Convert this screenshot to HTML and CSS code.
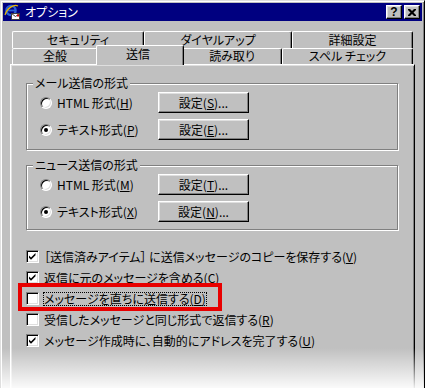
FILE: index.html
```html
<!DOCTYPE html>
<html lang="ja">
<head>
<meta charset="utf-8">
<title>オプション</title>
<link rel="stylesheet" href="styles.css">
</head>
<body>
<div class="window">
  <div class="titlebar">
    <svg class="app-icon" width="16" height="16" viewBox="0 0 16 16">
      <ellipse cx="7" cy="6.5" rx="4.6" ry="4.6" fill="none" stroke="#2a62d8" stroke-width="2.4"/>
      <rect x="3" y="5.6" width="8.5" height="1.8" fill="#2a62d8"/>
      <path d="M1 11 C3 4 10 0 14 2" fill="none" stroke="#e8b800" stroke-width="1.2"/>
      <rect x="7.5" y="9.5" width="8" height="6" fill="#fff" stroke="#404040" stroke-width="1"/>
      <path d="M7.5 9.5 L11.5 12.5 L15.5 9.5" fill="none" stroke="#404040" stroke-width="1"/>
      <rect x="13" y="10.5" width="2" height="2" fill="#d00000"/>
    </svg>
    <span class="title">オプション</span>
    <span class="tb tb-help">?</span>
    <span class="tb tb-close"><svg width="8" height="7" viewBox="0 0 8 7"><path d="M0 0h2l2 2 2-2h2v1l-2.5 2.5L8 6v1H6L4 5 2 7H0V6l2.5-2.5L0 1z" fill="#000"/></svg></span>
  </div>
  <div class="body">
    <div class="tabs">
      <div class="tab-row row-back">
        <div class="tab tab-sec">セキュリティ</div>
        <div class="tab tab-dial">ダイヤルアップ</div>
        <div class="tab tab-adv">詳細設定</div>
      </div>
      <div class="tab-row row-front">
        <div class="tab tab-gen">全般</div>
        <div class="tab tab-send selected">送信</div>
        <div class="tab tab-read">読み取り</div>
        <div class="tab tab-spell">スペル チェック</div>
      </div>
    </div>
    <div class="panel">
      <div class="group g-mail">
        <span class="legend">メール送信の形式</span>
        <div class="opt-row">
          <span class="radio"></span>
          <span class="opt-label">HTML 形式(<u>H</u>)</span>
          <span class="btn">設定(<u>S</u>)...</span>
        </div>
        <div class="opt-row">
          <span class="radio on"></span>
          <span class="opt-label">テキスト形式(<u>P</u>)</span>
          <span class="btn">設定(<u>E</u>)...</span>
        </div>
      </div>
      <div class="group g-news">
        <span class="legend">ニュース送信の形式</span>
        <div class="opt-row">
          <span class="radio"></span>
          <span class="opt-label">HTML 形式(<u>M</u>)</span>
          <span class="btn">設定(<u>T</u>)...</span>
        </div>
        <div class="opt-row">
          <span class="radio on"></span>
          <span class="opt-label">テキスト形式(<u>X</u>)</span>
          <span class="btn">設定(<u>N</u>)...</span>
        </div>
      </div>
      <div class="checks">
        <div class="check-row">
          <span class="checkbox on"><svg width="9" height="9" viewBox="0 0 9 9"><path d="M1 3.5l2 2 4.5-4.5v2.2L3 7.7 1 5.7z" fill="#000"/></svg></span>
          <span class="check-label">［送信済みアイテム］ に送信メッセージのコピーを保存する(<u>V</u>)</span>
        </div>
        <div class="check-row">
          <span class="checkbox on"><svg width="9" height="9" viewBox="0 0 9 9"><path d="M1 3.5l2 2 4.5-4.5v2.2L3 7.7 1 5.7z" fill="#000"/></svg></span>
          <span class="check-label">返信に元のメッセージを含める(<u>C</u>)</span>
        </div>
        <div class="check-row">
          <span class="checkbox"></span>
          <span class="check-label focus">メッセージを直ちに送信する(<u>D</u>)</span>
          <span class="highlight"></span>
        </div>
        <div class="check-row">
          <span class="checkbox"></span>
          <span class="check-label">受信したメッセージと同じ形式で返信する(<u>R</u>)</span>
        </div>
        <div class="check-row">
          <span class="checkbox on"><svg width="9" height="9" viewBox="0 0 9 9"><path d="M1 3.5l2 2 4.5-4.5v2.2L3 7.7 1 5.7z" fill="#000"/></svg></span>
          <span class="check-label">メッセージ作成時に、自動的にアドレスを完了する(<u>U</u>)</span>
        </div>
      </div>
    </div>
  </div>
  <div class="fade"></div>
</div>
</body>
</html>
```
FILE: styles.css
```css
html, body {
  margin: 0;
  height: 388px;
  overflow: hidden;
  background: #fff;
}
body {
  font-family: "Noto Sans CJK JP", "Noto Sans", sans-serif;
  font-size: 12px;
  font-feature-settings: "palt";
  color: #000;
}
.window {
  position: relative;
  width: 425px;
  height: 388px;
  box-sizing: border-box;
  background: #c0c0c0;
  border: 1px solid;
  border-bottom-width: 0;
  border-color: #dfdfdf #000 #000 #dfdfdf;
  box-shadow: inset 1px 1px #fff, inset -1px 0 #808080;
  padding: 2px 2px 0 2px;
  overflow: hidden;
}
.titlebar {
  display: flex;
  align-items: center;
  height: 18px;
  background: #000080;
  color: #fff;
  padding-left: 1px;
}
.app-icon {
  flex: none;
  margin-right: 5px;
}
.title {
  flex: 1;
  line-height: 18px;
}
.tb {
  display: flex;
  align-items: center;
  justify-content: center;
  width: 16px;
  height: 14px;
  box-sizing: border-box;
  background: #c0c0c0;
  border: 1px solid;
  border-color: #fff #000 #000 #fff;
  box-shadow: inset -1px -1px #808080, inset 1px 1px #dfdfdf;
  margin-left: 2px;
  color: #000;
  font-family: "Liberation Sans", sans-serif;
  font-weight: bold;
  font-size: 12px;
  line-height: 12px;
}
.tb-close {
  margin-right: 2px;
}
.body {
  padding: 10px 0 0 7px;
}
.tabs {
  margin-left: 2px;
  width: 401px;
}
.tab-row {
  display: flex;
  align-items: flex-start;
}
.row-back {
  height: 17px;
}
.row-front {
  height: 16px;
}
.tab {
  box-sizing: border-box;
  border-top: 1px solid #fff;
  border-left: 1px solid #fff;
  border-right: 1px solid #000;
  box-shadow: inset -1px 0 #808080;
  border-radius: 2px 2px 0 0;
  background: #c0c0c0;
  text-align: center;
  white-space: nowrap;
}
.row-back .tab {
  height: 17px;
  line-height: 15px;
}
.row-front .tab {
  height: 16px;
  line-height: 14px;
}
.tab-sec { width: 132px; }
.tab-dial { width: 148px; }
.tab-adv { width: 121px; }
.tab-gen { width: 86px; }
.tab-read { width: 100px; }
.tab-spell { width: 131px; }
.row-front .tab.selected {
  position: relative;
  z-index: 2;
  width: 88px;
  height: 20px;
  margin: -3px -2px -1px -2px;
  line-height: 15px;
  padding-right: 4px;
}
.panel {
  position: relative;
  z-index: 1;
  width: 405px;
  height: 324px;
  box-sizing: border-box;
  border: 1px solid;
  border-bottom-width: 0;
  border-color: #fff #000 #000 #fff;
  box-shadow: inset 1px 1px #dfdfdf, inset -1px 0 #808080;
  padding: 18px 0 0 15px;
}
.group {
  position: relative;
  width: 372px;
  box-sizing: border-box;
  border: 1px solid #808080;
  box-shadow: inset 1px 1px #fff, 1px 1px #fff;
  padding: 8px 0 9px 13px;
}
.g-news {
  margin-top: 15px;
  padding-bottom: 7px;
}
.legend {
  position: absolute;
  top: -8px;
  left: 6px;
  padding: 0 2px;
  line-height: 14px;
  background: #c0c0c0;
  white-space: nowrap;
}
.opt-row {
  display: flex;
  align-items: center;
  height: 21px;
}
.opt-row + .opt-row {
  margin-top: 6px;
}
.radio {
  position: relative;
  flex: none;
  width: 12px;
  height: 12px;
  box-sizing: border-box;
  border-radius: 50%;
  background: #fff;
  border: 1px solid;
  border-color: #808080 #fff #fff #808080;
  box-shadow: inset 1px 1px #000, inset -1px -1px #dfdfdf;
  margin-right: 5px;
}
.radio.on::after {
  content: "";
  position: absolute;
  left: 3px;
  top: 3px;
  width: 4px;
  height: 4px;
  border-radius: 50%;
  background: #000;
}
.opt-label {
  width: 101px;
  white-space: nowrap;
}
.btn {
  width: 91px;
  height: 21px;
  box-sizing: border-box;
  border: 1px solid;
  border-color: #fff #000 #000 #fff;
  box-shadow: inset -1px -1px #808080, inset 1px 1px #dfdfdf;
  text-align: center;
  line-height: 19px;
  white-space: nowrap;
}
.checks {
  margin-top: 16px;
}
.check-row {
  position: relative;
  display: flex;
  align-items: center;
  height: 21px;
}
.checkbox {
  flex: none;
  display: flex;
  align-items: center;
  justify-content: center;
  width: 13px;
  height: 13px;
  box-sizing: border-box;
  background: #fff;
  border: 1px solid;
  border-color: #808080 #fff #fff #808080;
  box-shadow: inset 1px 1px #000, inset -1px -1px #dfdfdf;
  margin-right: 4px;
}
.check-label {
  border: 1px dotted transparent;
  line-height: 12px;
  white-space: nowrap;
}
.check-label.focus {
  border-color: #000;
}
.highlight {
  position: absolute;
  left: -8px;
  top: -5px;
  width: 204px;
  height: 28px;
  box-sizing: border-box;
  border: 4px solid #e80000;
}
.fade {
  position: absolute;
  left: -1px;
  right: -1px;
  top: 347px;
  height: 42px;
  z-index: 5;
  background: linear-gradient(rgba(255,255,255,0), rgba(255,255,255,0.97));
}
```
